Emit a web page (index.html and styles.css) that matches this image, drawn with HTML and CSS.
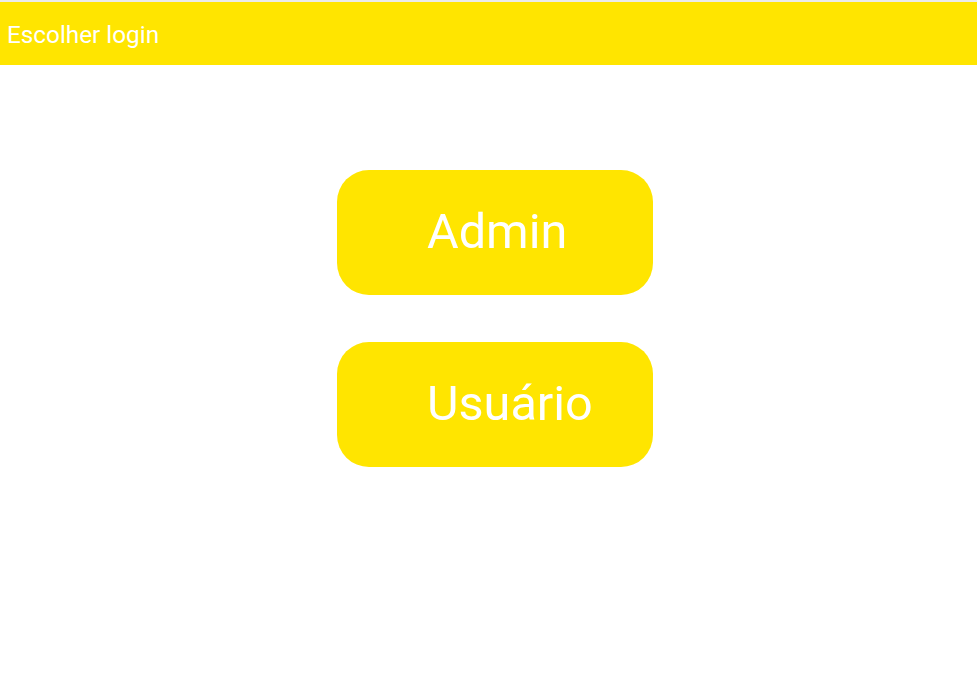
FILE: index.html
```html
<!DOCTYPE html>
<html lang="pt">
<head>
<meta charset="utf-8">
<title>Escolher login</title>
<link rel="stylesheet" href="styles.css">
</head>
<body>
<div class="topline"></div>
<header class="appbar">
  <span class="title">Escolher login</span>
</header>
<main class="choices">
  <button class="choice">Admin</button>
  <button class="choice">Usuário</button>
</main>
</body>
</html>
```

FILE: styles.css
```css
html, body {
  margin: 0;
  padding: 0;
  background: #ffffff;
  font-family: Roboto, "Liberation Sans", sans-serif;
}

.topline {
  height: 2px;
  background: #ebebeb;
}

.appbar {
  height: 63px;
  background: #ffe500;
  display: flex;
  align-items: center;
  padding-left: 7px;
  box-sizing: border-box;
}

.title {
  color: #ffffff;
  font-size: 24.3px;
  line-height: 28px;
  margin-top: 2px;
}

.choices {
  display: flex;
  flex-direction: column;
  align-items: flex-start;
  gap: 47px;
  padding-top: 105px;
  padding-left: 337px;
}

.choice {
  width: 316px;
  height: 125px;
  border: none;
  border-radius: 32px;
  background: #ffe500;
  color: #ffffff;
  font-family: Roboto, "Liberation Sans", sans-serif;
  font-size: 48.6px;
  text-align: left;
  padding: 0 0 3px 90px;
  margin: 0;
  box-sizing: border-box;
  cursor: pointer;
}
```
